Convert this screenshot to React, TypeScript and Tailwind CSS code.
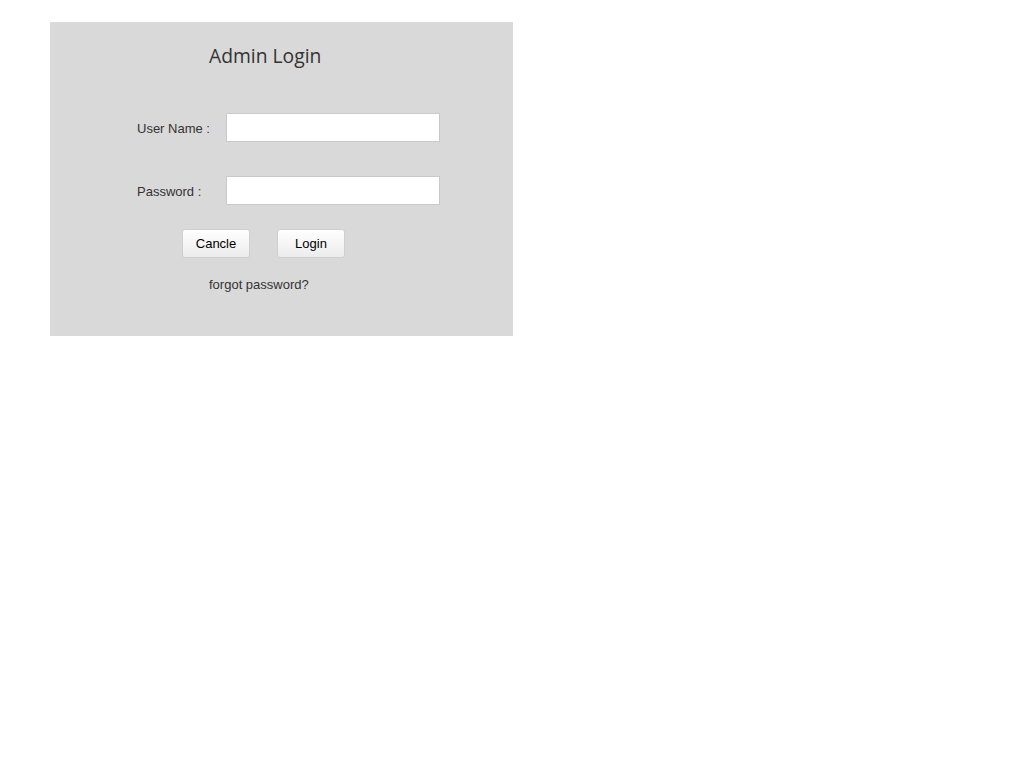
import React from "react";

// 入力行（ラベル + テキストボックス）
const FieldRow: React.FC<{ label: string; type?: string }> = ({ label, type = "text" }) => (
  <div className="flex items-center">
    <label className="w-[89px] pt-[2px] text-[13px] text-[#333]">{label}</label>
    <input
      type={type}
      className="w-[214px] h-[29px] bg-white border border-[#c9c9c9] outline-none px-2 text-[13px]"
    />
  </div>
);

const LoginButton: React.FC<{ label: string }> = ({ label }) => (
  <button className="w-[68px] h-[29px] rounded-[3px] border border-[#cfcfcf] bg-gradient-to-b from-white to-[#ececec] text-[13px] text-black">
    {label}
  </button>
);

const App: React.FC = () => {
  return (
    <div className="min-h-screen bg-white pt-[22px] pl-[50px] font-['Liberation_Sans',Arial,sans-serif]">
      <div className="w-[463px] h-[314px] bg-[#d9d9d9] flex flex-col">
        {/* タイトル */}
        <h1 className="mt-[20px] ml-[159px] h-[28px] leading-[28px] text-[19.3px] text-[#333] font-['Open_Sans',sans-serif]">
          Admin Login
        </h1>

        {/* フォーム */}
        <div className="mt-[43px] ml-[87px] flex flex-col gap-[34px]">
          <FieldRow label="User Name :" />
          <FieldRow label="Password :" type="password" />
        </div>

        {/* ボタン */}
        <div className="mt-[24px] ml-[132px] flex gap-[27px]">
          <LoginButton label="Cancle" />
          <LoginButton label="Login" />
        </div>

        <a href="#" className="mt-[19px] ml-[159px] text-[13px] text-[#333] leading-[15px]">
          forgot password?
        </a>
      </div>
    </div>
  );
};

export default App;
